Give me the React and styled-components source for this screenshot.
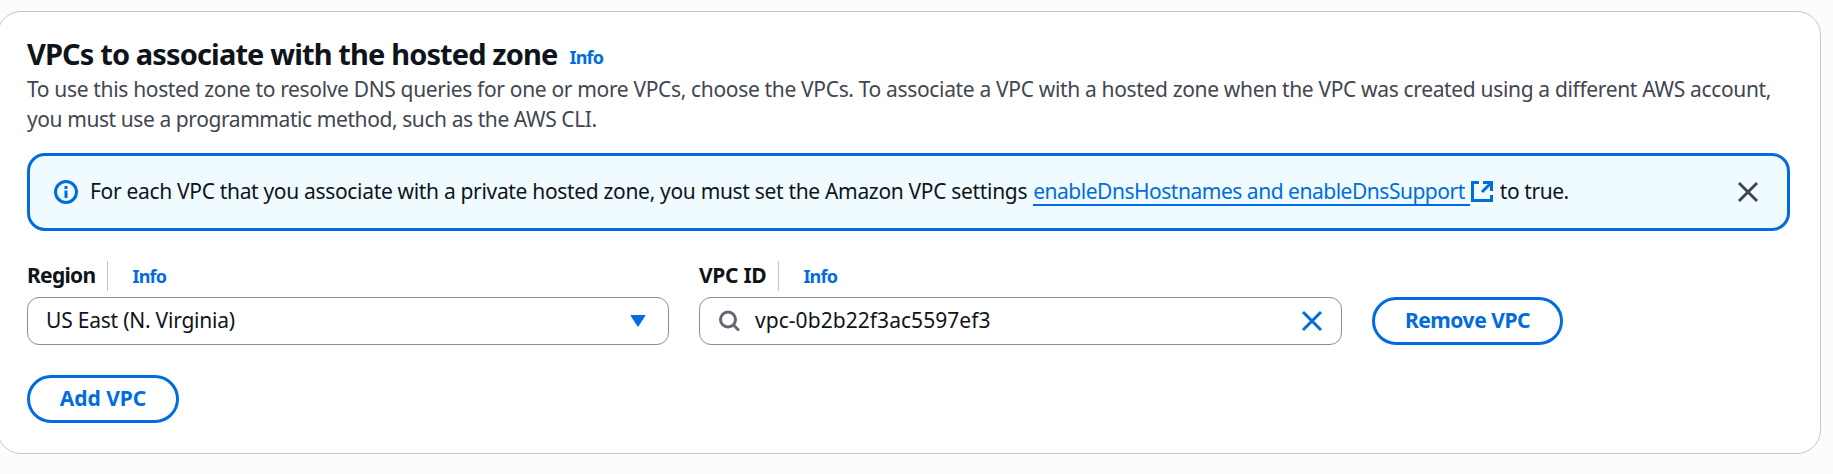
import React from "react";
import styled, { createGlobalStyle } from "styled-components";

const blue = "#006ce0";

const GlobalStyle = createGlobalStyle`
  * { box-sizing: border-box; }
  body {
    margin: 0;
    background: #fcfcfd;
    overflow: hidden;
    font-family: "Noto Sans", "Open Sans", sans-serif;
    font-size: 21px;
    line-height: 30px;
    color: #0f141a;
  }
`;

const Card = styled.section`
  width: 1824px;
  height: 443px;
  margin: 11px 0 0 -3px;
  padding: 24px 30px 0 29px;
  background: #fff;
  border: 1px solid #c6c6cd;
  border-radius: 24px;
`;

const Header = styled.header`
  display: flex;
  align-items: flex-start;
  gap: 12px;
  height: 38px;
`;

const Title = styled.h2`
  margin: 0;
  font-size: 29px;
  line-height: 36px;
  font-weight: 700;
  white-space: nowrap;
  letter-spacing: -0.87px;
`;

const InfoLink = styled.a`
  color: ${blue};
  font-size: 18px;
  font-weight: 700;
  letter-spacing: -0.8px;
  padding-top: ${(p) => p.$drop || 0}px;
`;

const Line = styled.span`
  display: block;
  width: max-content;
  white-space: nowrap;
  letter-spacing: ${(p) => p.$track || 0}px;
`;

const Description = styled.p`
  margin: 0;
  color: #424650;
`;

const Alert = styled.div`
  display: flex;
  align-items: center;
  height: 78px;
  margin-top: 19px;
  padding: 0 28px 0 24px;
  background: #f0fbff;
  border: 3px solid ${blue};
  border-radius: 18px;
`;

const AlertText = styled.div`
  display: flex;
  flex: 1;
  align-items: center;
  margin-left: 12px;
  padding-bottom: 2px;
`;

const DocsLink = styled.a`
  display: flex;
  align-items: center;
  gap: 1px;
  margin: 0 7px 0 6px;
  color: ${blue};
`;

const LinkLabel = styled.span`
  height: 30px;
  padding-right: 5px;
  border-bottom: 2px solid ${blue};
  white-space: nowrap;
  letter-spacing: -0.48px;
`;

const Fields = styled.div`
  display: grid;
  grid-template-columns: 642px 643px auto;
  column-gap: 30px;
  align-items: end;
  justify-content: start;
  margin-top: 30px;
`;

const Label = styled.div`
  display: flex;
  align-items: center;
  height: 30px;
  margin-bottom: 6px;
  font-weight: 700;
`;

const LabelText = styled.span`
  height: 30px;
  line-height: 28px;
  padding-right: 12px;
  margin-right: 24px;
  border-right: 1px solid #c6c6cd;
  white-space: nowrap;
  letter-spacing: ${(p) => p.$track || 0}px;
`;

const Control = styled.div`
  display: flex;
  align-items: center;
  justify-content: space-between;
  height: 48px;
  padding: 0 18px;
  border: 1px solid #8c8c94;
  border-radius: 12px;
`;

const Value = styled.div`
  display: flex;
  align-items: center;
  gap: 15px;
`;

const ValueText = styled(Line)`
  padding-bottom: 2px;
`;

const Button = styled.button`
  display: flex;
  align-items: center;
  justify-content: center;
  width: ${(p) => p.$width}px;
  height: 48px;
  padding: 0 0 2px;
  background: #fff;
  color: ${blue};
  border: 3px solid ${blue};
  border-radius: 24px;
  font: inherit;
  font-weight: 700;
  letter-spacing: ${(p) => p.$track || 0}px;
`;

const Actions = styled.div`
  margin-top: 30px;
`;

const Icon = styled.svg`
  display: block;
  flex: none;
  fill: none;
  stroke: ${(p) => p.$color || blue};
  stroke-width: 3;
`;

const CloseIcon = ({ color }) => (
  <Icon width="22" height="22" viewBox="0 0 22 22" $color={color}>
    <path d="M2 2l18 18M20 2L2 20" />
  </Icon>
);

export default function App() {
  return (
    <>
      <GlobalStyle />
      <Card>
        <Header>
          <Title>VPCs to associate with the hosted zone</Title>
          <InfoLink $drop={6}>Info</InfoLink>
        </Header>
        <Description>
          <Line $track={-0.34}>To use this hosted zone to resolve DNS queries for one or more VPCs, choose the VPCs. To associate a VPC with a hosted zone when the VPC was created using a different AWS account,</Line>
          <Line $track={-0.42}>you must use a programmatic method, such as the AWS CLI.</Line>
        </Description>
        <Alert>
          <Icon width="24" height="24" viewBox="0 0 24 24">
            <circle cx="12" cy="12" r="10.5" />
            <path d="M12 10.5V18M12 6v3" />
          </Icon>
          <AlertText>
            <Line $track={-0.323}>For each VPC that you associate with a private hosted zone, you must set the Amazon VPC settings</Line>
            <DocsLink>
              <LinkLabel>enableDnsHostnames and enableDnsSupport</LinkLabel>
              <Icon width="22" height="24" viewBox="0 -2 22 24">
                <path d="M8 1.5H1.5v18h19V14M12 1.5h8.5V10M20.5 1.5L11 11" />
              </Icon>
            </DocsLink>
            <Line $track={-0.44}>to true.</Line>
          </AlertText>
          <CloseIcon color="#424650" />
        </Alert>
        <Fields>
          <div>
            <Label>
              <LabelText $track={-0.7}>Region</LabelText>
              <InfoLink>Info</InfoLink>
            </Label>
            <Control>
              <ValueText $track={-0.22}>US East (N. Virginia)</ValueText>
              <svg width="24" height="24" viewBox="0 0 24 24">
                <path d="M5 6.5h14l-7 10.8z" fill={blue} stroke={blue} strokeLinejoin="round" />
              </svg>
            </Control>
          </div>
          <div>
            <Label>
              <LabelText $track={-0.3}>VPC ID</LabelText>
              <InfoLink>Info</InfoLink>
            </Label>
            <Control>
              <Value>
                <Icon width="22" height="22" viewBox="0 0 22 22" $color="#656871">
                  <circle cx="10" cy="9.5" r="7.5" />
                  <path d="M15 14.5l6 6" />
                </Icon>
                <ValueText $track={0.05}>vpc-0b2b22f3ac5597ef3</ValueText>
              </Value>
              <CloseIcon />
            </Control>
          </div>
          <Button $width={191} $track={-0.45}>Remove VPC</Button>
        </Fields>
        <Actions>
          <Button $width={152}>Add VPC</Button>
        </Actions>
      </Card>
    </>
  );
}
